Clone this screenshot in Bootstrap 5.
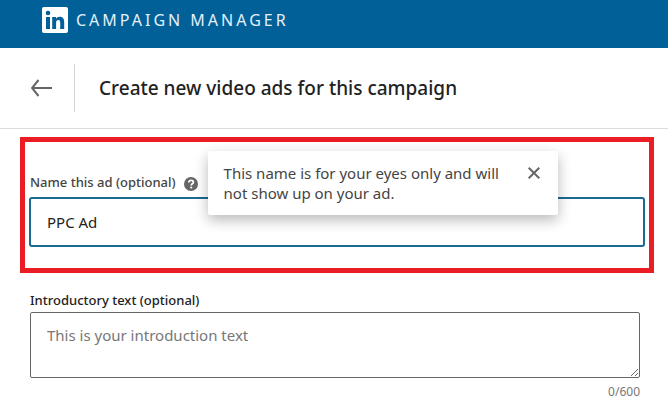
<!DOCTYPE html>
<html lang="en">
<head>
<meta charset="utf-8">
<meta name="viewport" content="width=device-width, initial-scale=1">
<title>Campaign Manager</title>
<link rel="stylesheet" href="https://cdn.jsdelivr.net/npm/bootstrap@5.3.0/dist/css/bootstrap.min.css">
<style>
  body { font-family: "Noto Sans", "Open Sans", sans-serif; font-size: 15px; line-height: 20px; color: #222; background: #fff; }
  .topbar { background: #006097; min-height: 48px; padding: 0 42px 8px; }
  .brand-name { font-size: 16px; letter-spacing: 3px; color: #e4f1fa; }
  .titlebar { padding: 16px 24px; border-bottom: 1px solid #dcdcdc; }
  .back-link { width: 51px; height: 48px; margin-right: 24px; padding-left: 7px; border-right: 1px solid #d5d5d5; color: #666; }
  .page-title { font-size: 19px; line-height: 24px; font-weight: 500; color: #222; }
  .form-area { padding: 8px 14px 0 20px; }
  .callout { border: 5px solid #ea1c24; padding: 30px 4px 21px; }
  .field-label { font-size: 13px; line-height: 20px; font-weight: 500; }
  .name-row { padding-left: 1px; color: #444; margin-bottom: 5px; }
  .field-input, .field-area { font-size: 15px; line-height: 20px; color: #222; background: #fff; border-radius: 3px; }
  .field-input, .field-input:focus { height: 50px; padding: 0 16px; border: 2px solid #1b6a92; box-shadow: none; }
  .field-area { height: 66px; padding: 12px 16px; border: 1px solid #666; border-radius: 2px; }
  .field-area::placeholder { color: #777; }
  .intro-group { padding: 17px 14px 0 10px; color: #222; }
  .intro-group .field-label { margin-bottom: 2px; }
  .help-btn { color: #666; margin-top: 3px; }
  .tip { left: calc(100% + 10px); top: -21px; width: 350px; min-height: 64px; padding: 12px 16px; background: #fff; color: #444; border-radius: 2px; box-shadow: 0 5px 14px rgba(0,0,0,.28); z-index: 5; }
  .tip-close { color: #666; width: 16px; height: 20px; }
  .counter { font-size: 12px; line-height: 16px; color: #777; margin-top: 6px; }
</style>
<script src="https://cdn.jsdelivr.net/npm/bootstrap@5.3.0/dist/js/bootstrap.bundle.min.js" defer></script>
</head>
<body>
<header class="topbar d-flex align-items-center">
  <a href="#" class="d-flex align-items-center gap-2 text-decoration-none">
    <svg width="26" height="26" viewBox="0 0 26 26" role="img" aria-label="LinkedIn">
      <rect width="26" height="26" rx="2" fill="#fff"/>
      <circle cx="6" cy="6" r="2.3" fill="#006097"/>
      <path fill="#006097" d="M4 10h4v12H4zM10.200 10H14v1.700c.700-1.200 2-2 3.700-2 3.400 0 4.500 2.200 4.500 5.500V22h-4v-6.200c0-1.600-.300-2.800-1.900-2.800s-2.200 1.200-2.200 2.900V22h-3.900z"/>
    </svg>
    <span class="brand-name">CAMPAIGN MANAGER</span>
  </a>
</header>
<div class="titlebar d-flex align-items-center">
  <a href="#" class="back-link d-flex align-items-center" aria-label="Back">
    <svg width="22" height="18" viewBox="0 0 22 18" fill="none" stroke="currentColor" stroke-width="2"><path d="M21 9H1M7.500 1 1 9l6.500 8"/></svg>
  </a>
  <h1 class="page-title mb-0">Create new video ads for this campaign</h1>
</div>
<main class="form-area">
  <section class="callout">
    <div class="name-row d-flex">
      <div class="position-relative d-flex align-items-center gap-2">
        <label class="field-label" for="ad-name">Name this ad (optional)</label>
        <button type="button" class="help-btn btn p-0 border-0 d-flex" aria-label="Help">
          <svg width="14" height="14" viewBox="0 0 14 14"><circle cx="7" cy="7" r="7" fill="currentColor"/><path d="M4.800 5.500C4.800 4 5.700 3.300 7.100 3.300s2.300.700 2.300 1.900c0 1.600-2.200 1.500-2.200 3.200" fill="none" stroke="#fff" stroke-width="1.700"/><circle cx="7.200" cy="10.500" r="1.100" fill="#fff"/></svg>
        </button>
        <div class="tip position-absolute d-flex justify-content-between align-items-start" role="status">
          <div>This name is for your eyes only and will<br>not show up on your ad.</div>
          <button type="button" class="tip-close btn p-0 border-0 d-flex align-items-center justify-content-center" aria-label="Close">
            <svg width="12" height="12" viewBox="0 0 12 12" stroke="currentColor" stroke-width="2"><path d="m.7.7 10.600 10.600M11.300.7.7 11.300"/></svg>
          </button>
        </div>
      </div>
    </div>
    <input type="text" id="ad-name" class="field-input form-control" value="PPC Ad">
  </section>
  <div class="intro-group">
    <label class="field-label d-block" for="intro">Introductory text (optional)</label>
    <textarea id="intro" class="field-area form-control" placeholder="This is your introduction text"></textarea>
    <div class="counter text-end">0/600</div>
  </div>
</main>
</body>
</html>
